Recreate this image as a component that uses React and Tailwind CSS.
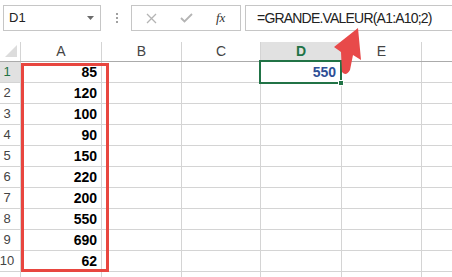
import React from 'react';

const values = [85, 120, 100, 90, 150, 220, 200, 550, 690, 62];

// column widths incl. right border
const cols = [
  { name: 'A', w: 'w-[81px]' },
  { name: 'B', w: 'w-[80px]' },
  { name: 'C', w: 'w-[79px]' },
  { name: 'D', w: 'w-[81px]' },
  { name: 'E', w: 'w-[80px]' },
  { name: '', w: 'w-[60px]' },
];

function Toolbar() {
  return (
    <div className="h-[42px] flex items-start pt-[5px] pl-[3px]">
      <div className="w-[98px] h-[26px] border border-[#c6c6c6] flex items-center justify-between pl-[5px] pr-[6px]">
        <span className="text-[13px] text-[#222]">D1</span>
        <svg width="7" height="4" viewBox="0 0 7 4">
          <polygon points="0,0 7,0 3.5,4" fill="#6b6b6b" />
        </svg>
      </div>
      <div className="ml-[15px] h-[26px] flex flex-col justify-center gap-[2px]">
        <span className="block w-[2px] h-[2px] bg-[#a0a0a0]" />
        <span className="block w-[2px] h-[2px] bg-[#a0a0a0]" />
        <span className="block w-[2px] h-[2px] bg-[#a0a0a0]" />
      </div>
      <div className="ml-[13px] w-[110px] h-[26px] border border-[#c6c6c6] flex items-center">
        <svg className="ml-[14px]" width="11" height="11" viewBox="0 0 11 11">
          <path d="M1 1 L10 10 M10 1 L1 10" stroke="#b4b4b4" strokeWidth="1.3" />
        </svg>
        <svg className="ml-[23px]" width="13" height="10" viewBox="0 0 13 10">
          <path d="M1 5 L4.5 8.5 L12 1" stroke="#b4b4b4" strokeWidth="1.8" fill="none" />
        </svg>
        <span className="ml-[23px] text-[13px] italic text-[#333] font-['Liberation_Serif',serif]">
          fx
        </span>
      </div>
      <div className="ml-[4px] flex-1 h-[26px] border-y border-l border-[#c6c6c6] flex items-center pl-[11px]">
        <span className="text-[14px] tracking-[-0.8px] text-[#222] whitespace-nowrap">
          =GRANDE.VALEUR(A1:A10;2)
        </span>
      </div>
    </div>
  );
}

function HeaderRow() {
  return (
    <div className="flex h-[20px] border-b border-[#ababab]">
      <div className="w-[21px] shrink-0 border-r border-[#d4d4d4] relative">
        <svg className="absolute left-[5px] top-[3px]" width="12" height="12" viewBox="0 0 12 12">
          <polygon points="12,0 12,12 0,12" fill="#dcdcdc" />
        </svg>
      </div>
      {cols.map((c) => (
        <div
          key={c.name || 'x'}
          className={`${c.w} shrink-0 border-r border-[#d4d4d4] flex items-center justify-center text-[14px] ${
            c.name === 'D' ? 'bg-[#e1e1e1] text-[#217346] font-bold' : 'text-[#444]'
          }`}
        >
          {c.name}
        </div>
      ))}
    </div>
  );
}

function DataRow({ idx, value }) {
  const selected = idx === 1;
  return (
    <div className="flex h-[21px] border-b border-[#d4d4d4]">
      <div
        className={`w-[21px] shrink-0 border-r border-[#d4d4d4] flex items-center pr-[6px] justify-center text-[13px] ${
          selected ? 'bg-[#e1e1e1] text-[#217346]' : 'text-[#444]'
        }`}
      >
        {value !== undefined ? idx : ''}
      </div>
      {cols.map((c) => (
        <div
          key={c.name || 'x'}
          className={`${c.w} shrink-0 border-r border-[#d4d4d4] flex items-center justify-end pr-[4px] text-[14px] font-bold`}
        >
          {c.name === 'A' && value !== undefined && <span className="text-black">{value}</span>}
          {c.name === 'D' && selected && <span className="text-[#2f4f96] pr-[1px]">550</span>}
        </div>
      ))}
    </div>
  );
}

export default function App() {
  return (
    <div className="w-[452px] h-[277px] relative overflow-hidden bg-white font-['Liberation_Sans',Arial,sans-serif]">
      <Toolbar />
      <div>
        <HeaderRow />
        {values.map((v, i) => (
          <DataRow key={i} idx={i + 1} value={v} />
        ))}
        <DataRow idx={11} />
      </div>

      {/* selected cell D1 */}
      <div className="absolute left-[259px] top-[60px] w-[83px] h-[24px] border-2 border-[#217346]" />
      <div className="absolute left-[338px] top-[80px] w-[6px] h-[6px] bg-[#217346] border border-white" />

      {/* red highlight around A1:A10 */}
      <div className="absolute left-[21px] top-[63px] w-[88px] h-[209px] border-[3px] border-[#e8463f]" />

      {/* red arrow pointing at formula */}
      <svg className="absolute left-0 top-0 pointer-events-none" width="452" height="277" viewBox="0 0 452 277">
        <path
          d="M358 28 L361 60 L353 55 L350 70 Q346 77 342 72 L341 52 L334 47 Z"
          fill="#e84a4a"
        />
      </svg>
    </div>
  );
}
